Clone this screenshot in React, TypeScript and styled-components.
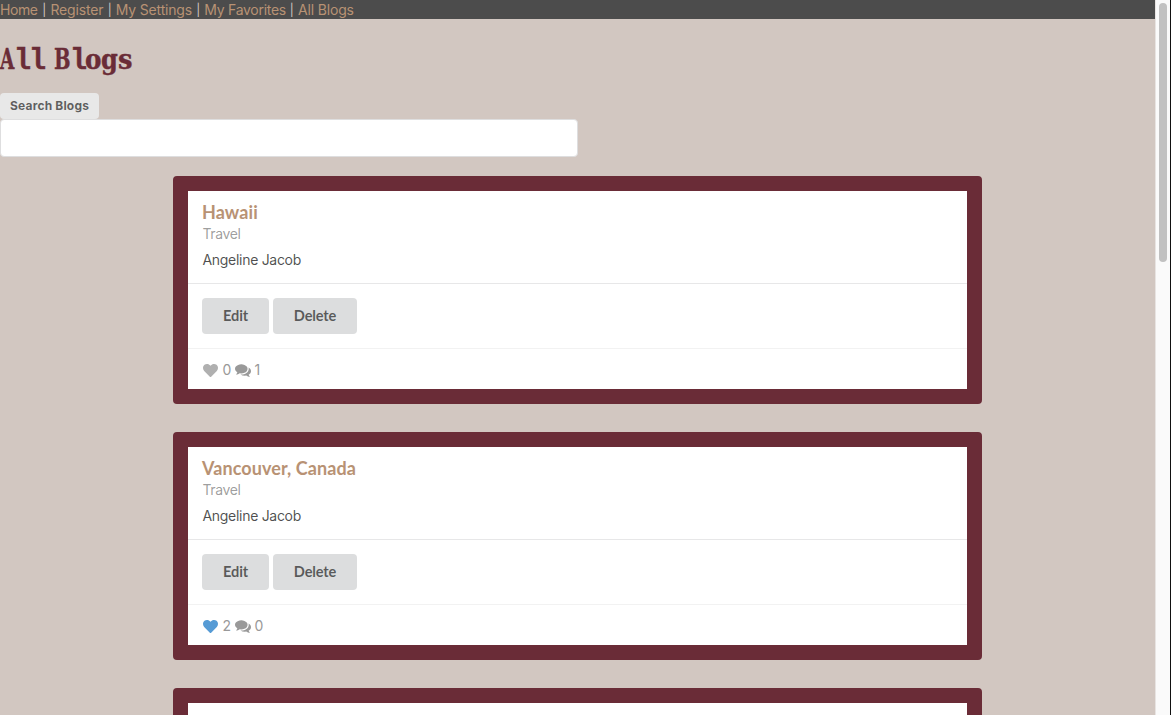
import React from "react";
import styled, { createGlobalStyle } from "styled-components";
import { FaHeart } from "react-icons/fa";

const GlobalStyle = createGlobalStyle`
  *, *::before, *::after { box-sizing: border-box; }
  html, body { margin: 0; padding: 0; height: 100%; overflow: hidden; }
  body {
    background: #d2c7c1;
    font-family: Inter, "Liberation Sans", sans-serif;
    font-size: 14px;
    line-height: 18px;
    color: rgba(0, 0, 0, 0.7);
  }
`;

const Frame = styled.div`
  display: flex;
  height: 715px;
  overflow: hidden;
`;

const Page = styled.main`
  flex: 1;
  min-width: 0;
  overflow: hidden;
`;

const ScrollTrack = styled.div`
  width: 16px;
  flex: none;
  padding: 3px 0 0 3px;
  background: #fafafa;
  border-left: 1px solid #e8e4e2;
  border-right: 1px solid #111;
`;

const ScrollThumb = styled.div`
  width: 8px;
  height: 259px;
  border-radius: 4px;
  background: #c1c1c1;
`;

const Nav = styled.nav`
  display: flex;
  height: 19px;
  padding-top: 1px;
  background: #4c4c4c;
  color: #d2c7c1;
  white-space: pre;
`;

const NavLink = styled.a<{ $width: number; $spacing: number }>`
  width: ${(p) => p.$width}px;
  letter-spacing: ${(p) => p.$spacing}px;
  color: #b89274;
`;

const Divider = styled.span`
  width: 12.2px;
  font-size: 12px;
  text-align: center;
`;

const Title = styled.h1`
  height: 36px;
  margin: 23px 0 15px;
  font: bold 28px/36px "DejaVu Serif", serif;
  color: #6a2c37;
  white-space: nowrap;
  font-size: 0;
`;

const Letter = styled.span<{ $width: number; $scale: number; $mono?: boolean }>`
  display: inline-block;
  width: ${(p) => p.$width}px;
  height: 36px;
  font-family: ${(p) => (p.$mono ? '"Liberation Mono", monospace' : '"DejaVu Serif", serif')};
  font-size: ${(p) => (p.$mono ? 30 : 28)}px;
  white-space: pre;
  transform: scaleX(${(p) => p.$scale});
  transform-origin: left;
  -webkit-text-stroke: 0.4px #6a2c37;
`;

const SearchLabel = styled.label`
  display: block;
  width: 99px;
  height: 26px;
  padding-left: 10px;
  border-radius: 4px;
  background: #e8e8e8;
  color: rgba(0, 0, 0, 0.6);
  font-size: 12px;
  font-weight: 700;
  letter-spacing: 0.18px;
  line-height: 26px;
`;

const SearchInput = styled.input`
  display: block;
  width: 578px;
  height: 38px;
  border: 1px solid #dededf;
  border-radius: 4px;
  background: #fff;
  outline: none;
`;

const List = styled.section`
  display: flex;
  flex-direction: column;
  gap: 28px;
  width: 809px;
  margin: 19px 0 0 173px;
`;

const Card = styled.article`
  height: 228px;
  border: 15px solid #6a2c37;
  border-radius: 4px;
  background: #fff;
`;

const CardHeader = styled.header`
  height: 93px;
  padding: 10px 14px 0;
  border-bottom: 1px solid #e7e7e8;
`;

const BlogName = styled.h2`
  margin: 0;
  font: bold 18px/22px Lato, sans-serif;
  letter-spacing: 0.09px;
  color: #b89274;
`;

const Category = styled.div`
  height: 19px;
  padding: 2px 0 0 0.5px;
  letter-spacing: -0.4px;
  color: rgba(0, 0, 0, 0.4);
`;

const Author = styled.div`
  padding: 9px 0 0 0.5px;
  letter-spacing: -0.3px;
`;

const Actions = styled.div`
  display: flex;
  gap: 4px;
  height: 64px;
  padding: 14px;
`;

const Button = styled.button<{ $width: number }>`
  width: ${(p) => p.$width}px;
  height: 36px;
  padding: 0;
  border: 0;
  border-radius: 4px;
  background: #dcddde;
  color: rgba(0, 0, 0, 0.6);
  font: bold 14.6px/36px Lato, sans-serif;
  letter-spacing: -0.15px;
`;

const Stats = styled.footer`
  display: flex;
  align-items: center;
  height: 41px;
  padding: 2px 14px 0;
  border-top: 1px solid #f2f2f2;
  color: #999;
`;

const Heart = styled(FaHeart)<{ $liked: boolean }>`
  width: 15px;
  height: 15px;
  margin: 0 4.5px 0 1px;
  color: ${(p) => (p.$liked ? "#569bd5" : "#b0b0b0")};
`;

const CommentsIcon = styled.svg`
  width: 16px;
  height: 16px;
  margin: -1px 4px 0 0;
  fill: #999;
`;

const Count = styled.span`
  width: 12px;
`;

const links = [
  { label: "Home", width: 38.2, spacing: -0.45 },
  { label: "Register", width: 53.2, spacing: -0.15 },
  { label: "My Settings", width: 76.4, spacing: -0.17 },
  { label: "My Favorites", width: 81.4, spacing: -0.28 },
  { label: "All Blogs", width: 57, spacing: -0.15 },
];

const titleLetters = [
  { char: "A", width: 14, scale: 0.66 },
  { char: "l", width: 15, scale: 0.95, mono: true },
  { char: "l", width: 16, scale: 0.95, mono: true },
  { char: " ", width: 9, scale: 1 },
  { char: "B", width: 16, scale: 0.7 },
  { char: "l", width: 15, scale: 0.95, mono: true },
  { char: "o", width: 16, scale: 0.88 },
  { char: "g", width: 16.5, scale: 0.86 },
  { char: "s", width: 15, scale: 0.92 },
];

const blogs = [
  { name: "Hawaii", likes: 0, comments: 1, liked: false },
  { name: "Vancouver, Canada", likes: 2, comments: 0, liked: true },
];

function Comments() {
  return (
    <CommentsIcon viewBox="0 0 1792 1792" aria-hidden="true">
      <path d="M1408 768q0 139-94 257t-256.500 186.500-353.500 68.500q-86 0-176-16-124 88-278 128-36 9-86 16h-3q-11 0-20.500-8t-11.500-21q-1-3-1-6.500t.5-6.500 2-6l2.500-5 3.500-5.500 4-5 4.500-5 4-4.500q5-6 23-25t26-29.500 22.500-29 25-38.500 20.500-44q-124-72-195-177t-71-224q0-139 94-257t256.500-186.500 353.500-68.500 353.500 68.500 256.500 186.500 94 257z" />
      <path d="M1792 1024q0 120-71 224.500t-195 176.500q10 24 20.500 44t25 38.500 22.500 29 26 29.500 23 25q1 1 4 4.500t4.500 5 4 5 3.500 5.500l2.500 5 2 6 .5 6.500-1 6.500q-3 14-13 22t-22 7q-50-7-86-16-154-40-278-128-90 16-176 16-271 0-472-132 58 4 88 4 161 0 309-45t264-129q125-92 192-212t67-254q0-77-23-152 129 71 204 178t75 230z" />
    </CommentsIcon>
  );
}

export default function App() {
  return (
    <>
      <GlobalStyle />
      <Frame>
        <Page>
          <Nav>
            {links.map((link, i) => (
              <React.Fragment key={link.label}>
                {i > 0 && <Divider>|</Divider>}
                <NavLink $width={link.width} $spacing={link.spacing}>
                  {link.label}
                </NavLink>
              </React.Fragment>
            ))}
          </Nav>
          <Title>
            {titleLetters.map((l, i) => (
              <Letter key={i} $width={l.width} $scale={l.scale} $mono={l.mono}>
                {l.char}
              </Letter>
            ))}
          </Title>
          <SearchLabel htmlFor="search">Search Blogs</SearchLabel>
          <SearchInput id="search" />
          <List>
            {blogs.map((blog) => (
              <Card key={blog.name}>
                <CardHeader>
                  <BlogName>{blog.name}</BlogName>
                  <Category>Travel</Category>
                  <Author>Angeline Jacob</Author>
                </CardHeader>
                <Actions>
                  <Button $width={67}>Edit</Button>
                  <Button $width={84}>Delete</Button>
                </Actions>
                <Stats>
                  <Heart $liked={blog.liked} />
                  <Count>{blog.likes}</Count>
                  <Comments />
                  <Count>{blog.comments}</Count>
                </Stats>
              </Card>
            ))}
            <Card />
          </List>
        </Page>
        <ScrollTrack>
          <ScrollThumb />
        </ScrollTrack>
      </Frame>
    </>
  );
}
